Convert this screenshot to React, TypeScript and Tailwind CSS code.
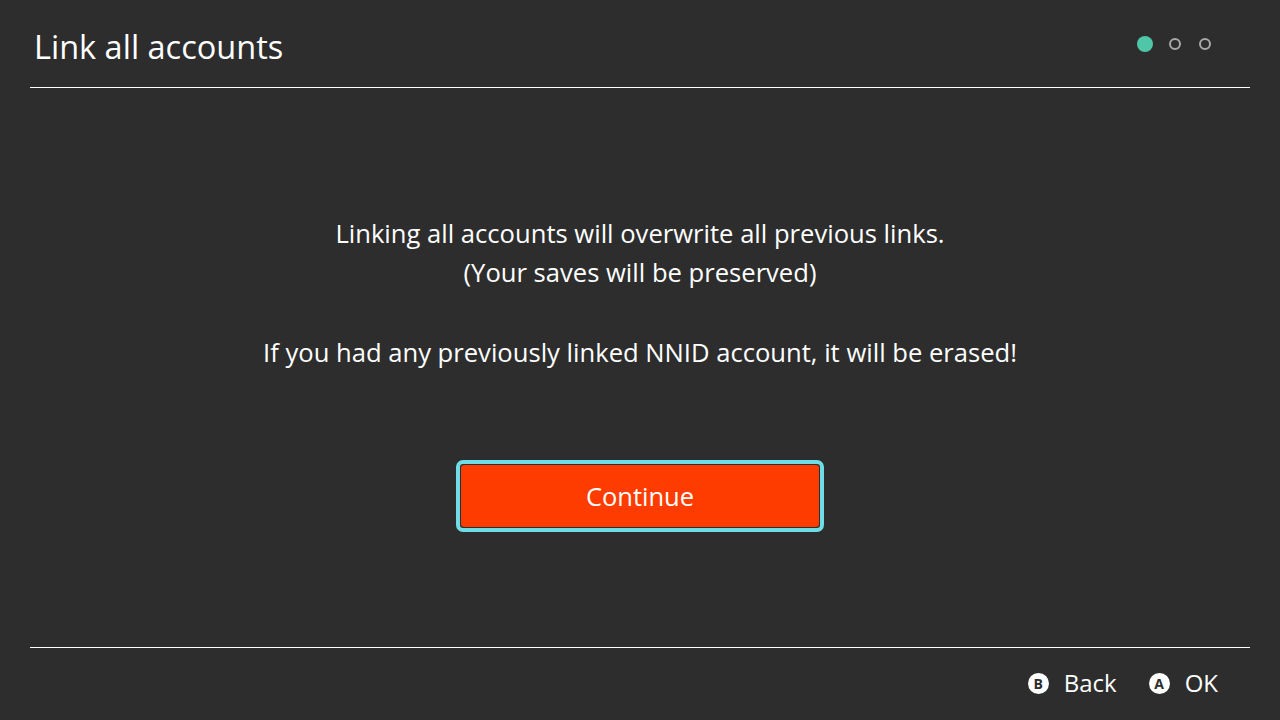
export default function App() {
  return (
    <div
      className="flex h-screen w-full flex-col bg-[#2d2d2d] text-white"
      style={{ fontFamily: '"Open Sans", "Noto Sans", sans-serif' }}
    >
      <header className="mx-[30px] flex h-[88px] items-center justify-between border-b border-white pl-[4px] pr-[39px]">
        <h1 className="mt-[8px] text-[32.5px] leading-none">Link all accounts</h1>
        <div className="flex items-center">
          <span className="h-4 w-4 rounded-full bg-[#4fc6a8]" />
          <span className="ml-4 h-3 w-3 rounded-full border-2 border-[#a9a9a9]" />
          <span className="ml-[18px] h-3 w-3 rounded-full border-2 border-[#a9a9a9]" />
        </div>
      </header>

      <main className="flex flex-1 flex-col items-center pt-[126px]">
        <div className="text-center text-[25.6px] leading-[39px]">
          <p>Linking all accounts will overwrite all previous links.</p>
          <p>(Your saves will be preserved)</p>
          <p className="mt-[41px]">If you had any previously linked NNID account, it will be erased!</p>
        </div>
        <button className="mt-[88px] rounded-[7px] border-[4px] border-[#6fdde8] bg-[#2d2d2d] p-px">
          <span className="flex h-[62px] w-[358px] items-center justify-center rounded-[3px] bg-[#ff3c00] text-[25.5px]">
            Continue
          </span>
        </button>
      </main>

      <footer className="mx-[30px] flex h-[73px] items-center justify-end gap-[32px] border-t border-white pb-[2px] pr-[32px]">
        <div className="flex items-center gap-[15px]">
          <span className="flex h-[21px] w-[21px] items-center justify-center rounded-full bg-white text-[14px] font-bold text-[#2d2d2d]">
            B
          </span>
          <span className="text-[24px]">Back</span>
        </div>
        <div className="flex items-center gap-[15px]">
          <span className="flex h-[21px] w-[21px] items-center justify-center rounded-full bg-white text-[14px] font-bold text-[#2d2d2d]">
            A
          </span>
          <span className="text-[24px]">OK</span>
        </div>
      </footer>
    </div>
  )
}
